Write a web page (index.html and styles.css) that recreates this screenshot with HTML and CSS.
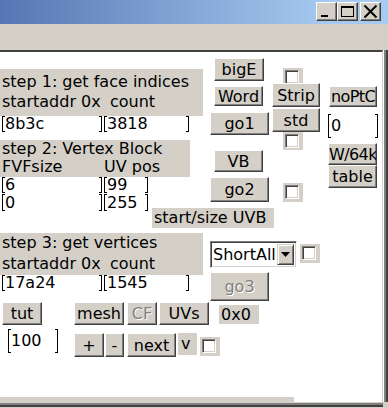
FILE: index.html
```html
<!DOCTYPE html>
<html lang="en">
<head>
    <meta charset="UTF-8">
    <title>Mesh Ripper</title>
    <link rel="stylesheet" href="styles.css">
</head>
<body>
    <div class="titlebar">
        <div class="caps">
            <span class="cap"><svg width="19" height="17" viewBox="0 0 19 17"><rect x="4" y="12" width="7" height="2" fill="#000"/></svg></span>
            <span class="cap"><svg width="19" height="17" viewBox="0 0 19 17"><rect x="3.5" y="3.5" width="12" height="10" fill="none" stroke="#000"/><rect x="3" y="3" width="13" height="2" fill="#000"/></svg></span>
            <span class="cap close"><svg width="19" height="17" viewBox="0 0 19 17"><path d="M3.5 2.5 L15.5 14.5 M15.5 2.5 L3.5 14.5" stroke="#000" stroke-width="2"/></svg></span>
        </div>
    </div>
    <div class="menubar"></div>

    <div class="frame">
        <div class="panel">
            <div class="top">
                <!-- left: labels and fields -->
                <div class="col col-a">
                    <div class="lbl step1">
                        <div class="ln ln1">step 1: get face indices</div>
                        <div class="ln ln2"><span class="k">startaddr 0x</span><span>count</span></div>
                    </div>
                    <div class="fields h19">
                        <div class="fld w100">8b3c</div>
                        <div class="fld w85">3818</div>
                    </div>
                    <div class="lbl step2">
                        <div class="ln s2a">step 2: Vertex Block</div>
                        <div class="ln s2b"><span class="k">FVFsize</span><span>UV pos</span></div>
                    </div>
                    <div class="fields h17">
                        <div class="fld w100">6</div>
                        <div class="fld w44">99</div>
                    </div>
                    <div class="fields">
                        <div class="fld w100 h17">0</div>
                        <div class="fld w44 h17">255</div>
                        <div class="lbl uvb">start/size UVB</div>
                    </div>
                    <div class="lbl step3">
                        <div class="ln s3a">step 3: get vertices</div>
                        <div class="ln s3b"><span class="k">startaddr 0x</span><span>count</span></div>
                    </div>
                    <div class="fields h18">
                        <div class="fld w100">17a24</div>
                        <div class="fld w85">1545</div>
                    </div>
                </div>

                <!-- go buttons -->
                <div class="col col-b">
                    <button class="btn b-bige">bigE</button>
                    <button class="btn b-word">Word</button>
                    <button class="btn b-go1">go1</button>
                    <button class="btn b-vb">VB</button>
                    <button class="btn b-go2">go2</button>
                    <div class="selrow">
                        <div class="select">
                            <span class="val">ShortAll</span>
                            <span class="drop"><svg width="9" height="5" viewBox="0 0 9 5"><path d="M0 0 H9 L4.5 5 Z" fill="#000"/></svg></span>
                        </div>
                        <span class="cb cb-sel"><i></i></span>
                    </div>
                    <button class="btn b-go3" disabled>go3</button>
                </div>

                <!-- strip / std -->
                <div class="col col-c">
                    <span class="cb cb1"><i></i></span>
                    <button class="btn b-strip">Strip</button>
                    <button class="btn b-std">std</button>
                    <span class="cb cb2"><i></i></span>
                    <span class="cb cb3"><i></i></span>
                </div>

                <!-- right column -->
                <div class="col col-d">
                    <button class="btn b-noptc tight">noPtC</button>
                    <div class="fld w50 h24">0</div>
                    <button class="btn b-w64 tight">W/64k</button>
                    <button class="btn b-table">table</button>
                </div>
            </div>

            <div class="row row1">
                <button class="btn b-tut">tut</button>
                <button class="btn b-mesh">mesh</button>
                <button class="btn b-cf" disabled>CF</button>
                <button class="btn b-uvs">UVs</button>
                <div class="lbl hex">0x0</div>
            </div>
            <div class="row row2">
                <div class="fld w50 h24 f100">100</div>
                <button class="btn b-plus">+</button>
                <button class="btn b-minus">-</button>
                <button class="btn b-next">next</button>
                <div class="lbl vlbl">v</div>
                <span class="cb cb-v"><i></i></span>
            </div>

            <div class="status"><span>put the addr of the block into the field above...</span></div>
        </div>
    </div>
</body>
</html>
```

FILE: styles.css
```css
/* General */
body {
    margin: 0;
    width: 388px;
    height: 408px;
    overflow: hidden;
    background-color: #d4d0c8;
    font-family: "DejaVu Sans", Verdana, sans-serif;
    font-size: 16px;
    color: #000;
}

/* Window chrome */
.titlebar {
    height: 24px;
    background: linear-gradient(to right, #5576b3, #a6caf0 85%);
    display: flex;
    justify-content: flex-end;
}

.caps {
    display: flex;
    padding: 2px 7px 0 0;
}

.cap {
    width: 21px;
    height: 19px;
    box-sizing: border-box;
    background: #d4d0c8;
    border: 1px solid;
    border-color: #fff #404040 #404040 #fff;
    box-shadow: inset -1px -1px #808080;
}

.cap svg {
    display: block;
}

.close {
    margin-left: 2px;
}

.menubar {
    height: 26px;
}

.frame {
    height: 358px;
}

.panel {
    width: 382px;
    height: 350px;
    background: #fff;
    border-top: 2px solid #404040;
    border-right: 1px solid #d4d0c8;
    box-shadow: 1px 0 #fff, 3px 0 #808080, 5px 0 #404040, 0 1px #d4d0c8, 0 3px #808080, 0 5px #404040;
}

/* Controls */
.btn {
    display: block;
    box-sizing: border-box;
    padding: 0;
    margin: 0;
    background: #d4d0c8;
    border: 1px solid;
    border-color: #fff #404040 #404040 #fff;
    box-shadow: inset -1px -1px #808080;
    font: inherit;
    color: #000;
    text-align: center;
    white-space: nowrap;
    overflow: hidden;
}

.btn.tight {
    letter-spacing: -0.6px;
}

.btn:disabled {
    color: #808080;
    text-shadow: 1px 1px #fff;
}

.lbl {
    background: #d4d0c8;
    box-sizing: border-box;
    white-space: nowrap;
}

.fld {
    position: relative;
    box-sizing: border-box;
    margin-left: 2px;
    padding-left: 3px;
    display: flex;
    align-items: center;
    line-height: 16px;
}

.fld::before,
.fld::after {
    content: "";
    position: absolute;
    top: 0;
    bottom: 0;
    width: 2px;
    border: 1px solid #000;
}

.fld::before {
    left: 0;
    border-right: 0;
}

.fld::after {
    right: 0;
    border-left: 0;
}

.w100 { width: 100px; }
.w85 { width: 85px; }
.w44 { width: 44px; }
.w50 { width: 50px; }
.h17 { height: 17px; }
.h18 { height: 18px; }
.h19 { height: 19px; }
.h24 { height: 24px; }

.fields {
    display: flex;
    align-items: flex-start;
}

.cb {
    display: block;
    box-sizing: border-box;
    width: 20px;
    height: 19px;
    padding: 2px 0 0 2px;
    background: #d4d0c8;
}

.cb i {
    display: block;
    box-sizing: border-box;
    width: 14px;
    height: 14px;
    background: #fff;
    border: 1px solid;
    border-color: #808080 #fff #fff #808080;
    box-shadow: inset 1px 1px #404040, inset -1px -1px #d4d0c8;
}

/* Top area columns */
.top {
    display: flex;
    height: 250px;
}

.col {
    display: flex;
    flex-direction: column;
    align-items: flex-start;
    flex: none;
}

.col-a { width: 203px; }
.col-b { width: 60px; margin-left: 7px; }
.col-c { width: 48px; margin-left: 2px; }
.col-d { width: 50px; margin-left: 8px; }

.ln {
    padding-left: 2px;
    display: flex;
}

.ln .k {
    width: 108px;
}

.step1 {
    width: 203px;
    height: 47px;
    margin-top: 17px;
    padding-top: 3px;
}

.ln1, .ln2 { line-height: 20px; }

.step2 {
    width: 190px;
    height: 37px;
    margin-top: 5px;
}

.s2a { line-height: 18px; }
.s2b { line-height: 18px; }
.s2b .k { width: 102px; }

.uvb {
    width: 122px;
    height: 20px;
    margin: 14px 0 0 4px;
    padding-left: 2px;
    line-height: 20px;
}

.step3 {
    width: 203px;
    height: 42px;
    margin-top: 5px;
}

.s3a { line-height: 20px; }
.s3b { line-height: 22px; }

/* column b */
.b-bige { margin: 6px 0 0 4px; width: 50px; height: 23px; }
.b-word { margin: 5px 0 0 4px; width: 49px; height: 20px; }
.b-go1 { margin-top: 6px; width: 59px; height: 23px; }
.b-vb { margin: 15px 0 0 4px; width: 49px; height: 22px; }
.b-go2 { margin-top: 5px; width: 59px; height: 25px; }
.b-go3 { margin-top: 4px; width: 59px; height: 29px; }

.selrow {
    display: flex;
    align-items: flex-start;
    margin-top: 39px;
    height: 27px;
}

.select {
    width: 87px;
    height: 27px;
    box-sizing: border-box;
    background: #fff;
    border: 1px solid;
    border-color: #808080 #fff #fff #808080;
    box-shadow: inset 1px 1px #404040, inset -1px -1px #d4d0c8;
    display: flex;
    align-items: center;
    padding: 0 2px 0 2px;
}

.select .val {
    flex: 1;
    white-space: nowrap;
    overflow: hidden;
}

.drop {
    flex: none;
    width: 17px;
    height: 21px;
    box-sizing: border-box;
    background: #d4d0c8;
    border: 1px solid;
    border-color: #d4d0c8 #404040 #404040 #d4d0c8;
    box-shadow: inset 1px 1px #fff, inset -1px -1px #808080;
    display: flex;
    align-items: center;
    justify-content: center;
}

.drop svg {
    display: block;
}

.cb-sel { margin: 3px 0 0 3px; }

/* column c */
.cb1 { margin: 16px 0 0 11px; height: 15px; }
.b-strip { width: 48px; height: 24px; }
.b-std { margin-top: 1px; width: 48px; height: 24px; }
.cb2 { margin-left: 11px; height: 18px; }
.cb3 { margin: 33px 0 0 11px; }

/* column d */
.b-noptc { margin: 34px 0 0 1px; width: 48px; height: 21px; }
.col-d .fld { margin: 7px 0 0 0; }
.b-w64 { margin-top: 5px; width: 49px; height: 22px; }
.b-table { width: 49px; height: 23px; }

/* bottom rows */
.row {
    display: flex;
    align-items: flex-start;
}

.row1 { height: 27px; }

.b-tut { margin-left: 2px; width: 40px; height: 23px; }
.b-mesh { margin-left: 32px; width: 50px; height: 23px; }
.b-cf { margin-left: 3px; width: 30px; height: 23px; }
.b-uvs { margin-left: 2px; width: 50px; height: 23px; }

.hex {
    margin: 3px 0 0 10px;
    width: 40px;
    height: 19px;
    padding-left: 2px;
    line-height: 19px;
}

.f100 { margin-left: 8px; }
.b-plus { margin: 4px 0 0 16px; width: 30px; height: 24px; }
.b-minus { margin: 4px 0 0 1px; width: 19px; height: 24px; }
.b-next { margin: 4px 0 0 3px; width: 49px; height: 24px; }

.vlbl {
    margin: 4px 0 0 2px;
    width: 19px;
    height: 22px;
    padding-left: 3px;
    line-height: 22px;
}

.cb-v { margin: 8px 0 0 3px; }

.status {
    margin-top: 40px;
    width: 294px;
    height: 5px;
    overflow: hidden;
    background: #d4d0c8;
}

.status span {
    display: block;
    padding-left: 16px;
    line-height: 30px;
    word-spacing: 6px;
    white-space: nowrap;
}
```
